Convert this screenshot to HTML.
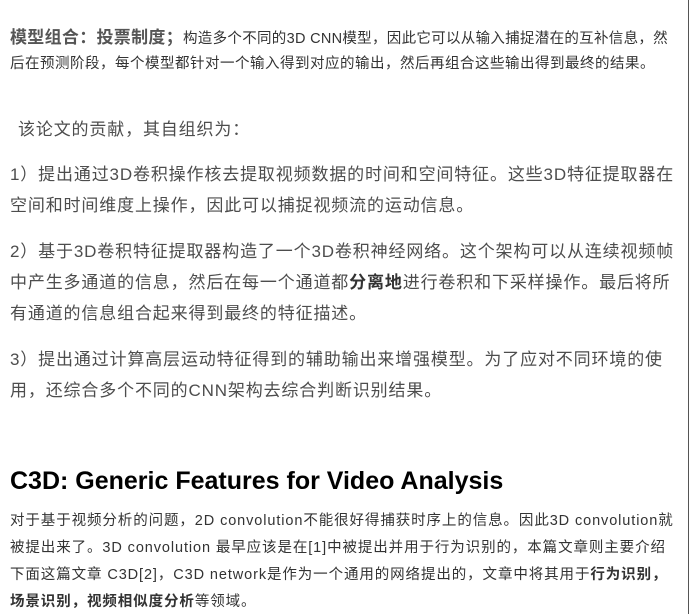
<!DOCTYPE html>
<html><head><meta charset="utf-8"><style>
body{margin:0;width:692px;height:614px;background:#fff;overflow:hidden;position:relative;font-family:"Liberation Sans","Noto Sans CJK SC",sans-serif;color:#4d4d4d}
.l{position:absolute;left:10px;white-space:nowrap}
.s{font-size:14.5px;color:#333;letter-spacing:0.5px}
.p{font-size:14.5px;color:#333;letter-spacing:0.9px}
.m{font-size:17px;letter-spacing:0.85px}
b{color:#333}
.vl{position:absolute;left:688px;top:0;width:1px;height:614px;background:#555}
</style></head><body>
<div class="vl"></div>
<div class="l s" style="top:23px;letter-spacing:0.3px"><b style="font-size:17px;color:#555">模型组合：投票制度；</b>构造多个不同的3D CNN模型，因此它可以从输入捕捉潜在的互补信息，然</div>
<div class="l s" style="top:52px">后在预测阶段，每个模型都针对一个输入得到对应的输出，然后再组合这些输出得到最终的结果。</div>
<div class="l m" style="top:115px;left:18px">该论文的贡献，其自组织为：</div>
<div class="l m" style="top:160px">1）提出通过3D卷积操作核去提取视频数据的时间和空间特征。这些3D特征提取器在</div>
<div class="l m" style="top:191px">空间和时间维度上操作，因此可以捕捉视频流的运动信息。</div>
<div class="l m" style="top:237px">2）基于3D卷积特征提取器构造了一个3D卷积神经网络。这个架构可以从连续视频帧</div>
<div class="l m" style="top:268px">中产生多通道的信息，然后在每一个通道都<b>分离地</b>进行卷积和下采样操作。最后将所</div>
<div class="l m" style="top:299px">有通道的信息组合起来得到最终的特征描述。</div>
<div class="l m" style="top:345px">3）提出通过计算高层运动特征得到的辅助输出来增强模型。为了应对不同环境的使</div>
<div class="l m" style="top:376px">用，还综合多个不同的CNN架构去综合判断识别结果。</div>
<div class="l" style="top:467px;font-size:25px;font-weight:bold;color:#000">C3D: Generic Features for Video Analysis</div>
<div class="l p" style="top:509px">对于基于视频分析的问题，2D convolution不能很好得捕获时序上的信息。因此3D convolution就</div>
<div class="l p" style="top:536px">被提出来了。3D convolution 最早应该是在[1]中被提出并用于行为识别的，本篇文章则主要介绍</div>
<div class="l p" style="top:563px">下面这篇文章 C3D[2]，C3D network是作为一个通用的网络提出的，文章中将其用于<b>行为识别，</b></div>
<div class="l p" style="top:590px"><b>场景识别，视频相似度分析</b>等领域。</div>
</body></html>
